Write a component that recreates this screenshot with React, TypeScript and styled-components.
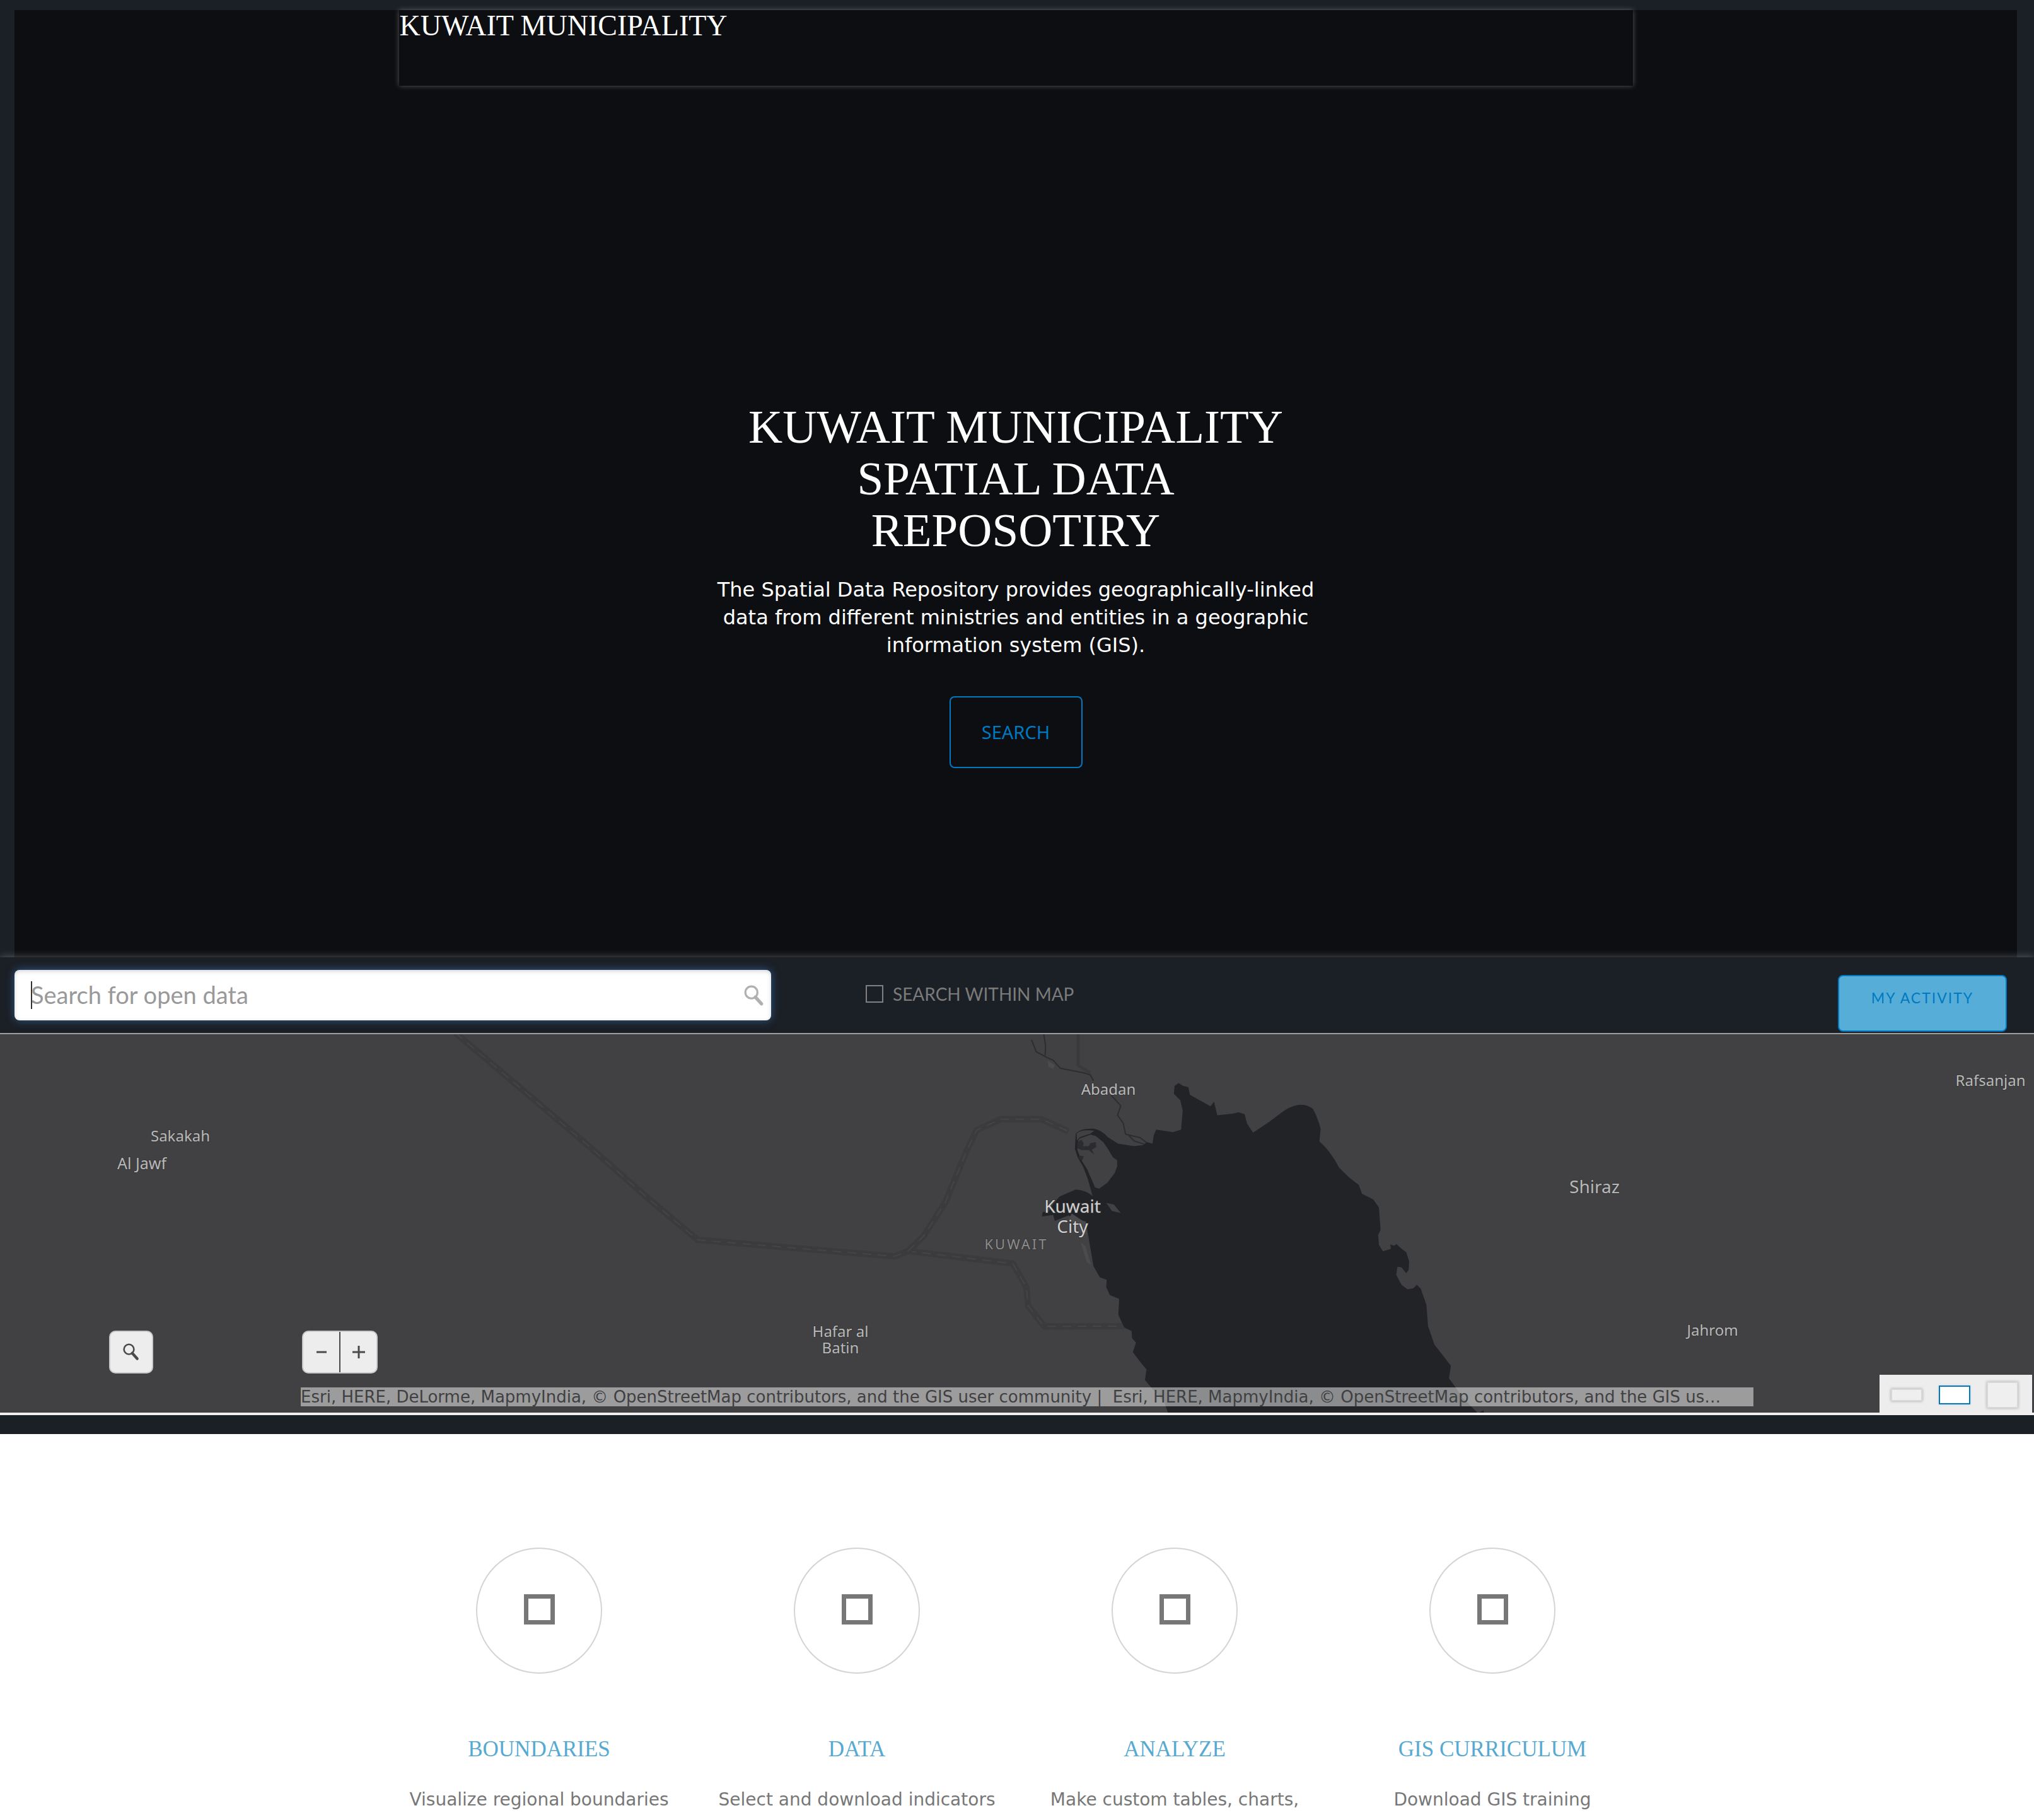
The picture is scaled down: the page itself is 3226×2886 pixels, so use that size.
import React from "react";
import styled, { createGlobalStyle } from "styled-components";

const SERIF = '"Liberation Serif", serif';
const BODY = '"DejaVu Sans", sans-serif';
const UI = 'Lato, "Liberation Sans", sans-serif';
const HUMAN = '"Noto Sans", "Liberation Sans", sans-serif';

const GlobalStyle = createGlobalStyle`
  *, *::before, *::after { box-sizing: border-box; }
  body { margin: 0; background: #1b1f26; font-family: ${BODY}; overflow-x: hidden; }
  h1, h2, p { margin: 0; font-weight: 400; }
  button, input { font: inherit; }
  button { cursor: pointer; padding: 0; }
`;

const HeroFrame = styled.header`
  padding: 16px 27px 0 23px;
`;

const Hero = styled.div`
  display: flex;
  flex-direction: column;
  align-items: center;
  min-height: 1502px;
  background: #0c0e11;
  color: #fff;
`;

const TitleBar = styled.div`
  width: 100%;
  max-width: 1957px;
  height: 120px;
  padding-left: 1px;
  background: #0c0e11;
  box-shadow: 0 0 8px rgba(255, 255, 255, 0.3);
`;

const SiteName = styled.p`
  font: 400 46px/50px ${SERIF};
`;

const Intro = styled.section`
  display: flex;
  flex-direction: column;
  align-items: center;
  max-width: 980px;
  padding-top: 500px;
  text-align: center;
`;

const Headline = styled.h1`
  font: 400 75px/82px ${SERIF};
  max-width: 900px;
`;

const Lead = styled.p`
  margin-top: 31px;
  font-size: 32px;
  line-height: 44px;
`;

const SearchLink = styled.a`
  display: grid;
  place-items: center;
  width: 211px;
  height: 114px;
  margin-top: 59px;
  border: 2px solid #0079c1;
  border-radius: 8px;
  color: #0079c1;
  font: 400 29px/32px ${HUMAN};
  text-decoration: none;
`;

const Toolbar = styled.form`
  display: flex;
  align-items: flex-start;
  min-height: 120px;
  padding: 20px 43px 0 23px;
  background: #1b1f26;
  box-shadow: 0 0 12px rgba(255, 255, 255, 0.3);
  position: relative;
`;

const SearchField = styled.div`
  position: relative;
  display: flex;
  flex: 0 1 1200px;
  height: 80px;

  &::before {
    content: "";
    position: absolute;
    left: 26px;
    top: 18px;
    width: 2px;
    height: 44px;
    background: #333;
  }

  svg {
    position: absolute;
    right: 10px;
    top: 24px;
  }
`;

const SearchInput = styled.input`
  width: 100%;
  padding: 0 64px 2px 26px;
  border: 0;
  border-radius: 8px;
  outline: 0;
  background: #fff;
  color: #333;
  font: 400 38px/44px ${UI};
  box-shadow: inset 0 2px 6px rgba(30, 40, 70, 0.2), 0 0 14px rgba(60, 130, 200, 0.6);

  &::placeholder { color: #999; opacity: 1; }
`;

const WithinMap = styled.label`
  display: flex;
  align-items: center;
  gap: 15px;
  margin: 20px 0 0 150px;
  color: #7b7b7b;
  font: 400 28px/36px ${UI};
`;

const Tick = styled.input`
  appearance: none;
  width: 28px;
  height: 28px;
  margin: 0;
  border: 2px solid #808080;
`;

const ActivityButton = styled.button`
  width: 268px;
  height: 90px;
  margin: 8px 0 0 auto;
  padding-bottom: 18px;
  border: 2px solid #0079c1;
  border-radius: 8px;
  background: #56aed8;
  color: #0079c1;
  font: 400 23px/28px ${UI};
  letter-spacing: 2px;
`;

const MapPane = styled.section`
  position: relative;
  height: 606px;
  border-top: 2px solid #9d9ea0;
  border-bottom: 4px solid #efefef;
  background: #414143;
  overflow: hidden;
`;

const MapDrawing = styled.svg`
  display: block;
  width: 100%;
  height: 600px;
`;

const MapTool = styled.div<{ $left: number }>`
  position: absolute;
  left: ${(p) => p.$left}px;
  bottom: 62px;
  display: flex;
  height: 68px;
  border: 2px solid #c8c8ca;
  border-radius: 10px;
  background: #ededed;
`;

const ToolButton = styled.button<{ $width: number }>`
  display: grid;
  place-items: center;
  width: ${(p) => p.$width}px;
  border: 0;
  background: none;
  color: #4a4a4a;

  & + & { border-left: 2px solid #4a4a4a; }
`;

const Attribution = styled.p`
  position: absolute;
  left: 477px;
  right: 445px;
  bottom: 10px;
  height: 30px;
  padding-right: 16px;
  overflow: hidden;
  background: rgba(255, 255, 255, 0.48);
  color: #404042;
  font-size: 26px;
  line-height: 30px;
  white-space: pre;
  text-overflow: ellipsis;
`;

const SizePicker = styled.div`
  position: absolute;
  right: 3px;
  bottom: 0;
  display: flex;
  align-items: center;
  justify-content: space-between;
  width: 242px;
  height: 60px;
  padding: 4px 22px 0 18px;
  background: #ededed;
`;

const SizeButton = styled.button<{ $height: number; $active?: boolean }>`
  width: 50px;
  height: ${(p) => p.$height}px;
  border: 2px solid ${(p) => (p.$active ? "#0079c1" : "#d8d8d8")};
  background: ${(p) => (p.$active ? "#fff" : "#efefef")};
  box-shadow: 0 0 4px rgba(0, 0, 0, ${(p) => (p.$active ? 0.1 : 0.3)});
`;

const Features = styled.main`
  display: grid;
  grid-template-columns: repeat(4, minmax(0, 504px));
  justify-content: center;
  margin-top: 30px;
  padding: 180px 4px 0 0;
  background: #fff;
`;

const Feature = styled.article`
  display: flex;
  flex-direction: column;
  align-items: center;
  text-align: center;
`;

const Badge = styled.div`
  display: grid;
  place-items: center;
  width: 200px;
  height: 200px;
  padding-bottom: 4px;
  border: 2px solid #d4d4d4;
  border-radius: 50%;
`;

const Glyph = styled.span`
  width: 49px;
  height: 48px;
  border: 7px solid #777;
`;

const FeatureTitle = styled.h2`
  margin-top: 100px;
  color: #56aad2;
  font: 400 35px/40px ${SERIF};
`;

const FeatureText = styled.p`
  margin-top: 40px;
  height: 52px;
  overflow: hidden;
  color: #777;
  font-size: 28px;
  line-height: 40px;
`;

const Magnifier = ({ size, color }: { size: number; color: string }) => (
  <svg width={size} height={size} viewBox="0 0 30 32" fill="none" stroke={color} aria-hidden="true">
    <circle cx="11" cy="11" r="9" strokeWidth="3" />
    <path d="M17 18 L26 28" strokeWidth="5" strokeLinecap="round" />
  </svg>
);

const LABELS = [
  { lines: ["Sakakah"], x: 286, y: 170, size: 24 },
  { lines: ["Al Jawf"], x: 225, y: 214, size: 25 },
  { lines: ["Abadan"], x: 1758, y: 96, size: 24 },
  { lines: ["Kuwait", "City"], x: 1701, y: 283, size: 28, leading: 32, color: "#d0d0d0" },
  { lines: ["Hafar al", "Batin"], x: 1333, y: 480, size: 24, leading: 26 },
  { lines: ["Shiraz"], x: 2529, y: 252, size: 28 },
  { lines: ["Rafsanjan"], x: 3157, y: 82, size: 24 },
  { lines: ["Jahrom"], x: 2716, y: 478, size: 24 },
];

const BORDERS = [
  "M160 20 L300 250 L440 480 L560 685 L662 850 L1070 916 L1098 895 L1315 945 L1343 1040 L1347 1115 L1380 1197 L1560 1196",
  "M1098 895 L1130 835 L1175 700 L1220 490 L1240 410 L1290 366 L1375 366 L1430 415",
];

const SEA =
  "M726 232 L736 221 L746 232 L760 238 L764 268 L815 314 L824 296 L832 350 L870 344 L885 338 L900 346 L906 384 L921 420 " +
  "L960 378 L1000 330 Q1042 288 1070 325 Q1082 360 1089 405 L1086 455 Q1112 490 1135 560 L1160 600 L1184 630 L1192 665 L1220 688 " +
  "L1234 720 L1238 810 L1232 830 L1234 870 L1244 896 L1264 886 L1262 868 L1272 874 L1277 866 L1290 885 L1302 900 L1309 935 L1308 970 L1302 984 " +
  "L1290 960 L1280 958 L1277 990 L1290 1030 L1305 1048 L1320 1044 L1328 1030 L1338 1046 L1352 1110 L1356 1195 L1372 1270 L1413 1355 L1408 1405 " +
  "L1424 1440 L1440 1480 L1480 1545 L1494 1534 L1500 1570 L715 1570 L700 1500 L672 1450 L652 1412 L656 1370 L636 1330 L622 1300 L630 1262 L620 1244 " +
  "L619 1216 L600 1200 L586 1150 L588 1086 L565 1072 L556 1040 L557 1010 L540 1000 L524 955 L514 860 L505 775 L478 766 L462 752 L428 774 L424 750 " +
  "L396 756 L398 738 L412 738 L424 706 L440 676 L480 648 Q505 650 522 674 L510 606 L498 555 L485 520 L478 485 L480 425 Q490 402 525 404 " +
  "Q545 410 560 438 L585 464 L625 474 L648 470 L656 458 L671 464 L674 430 L680 408 L722 418 L742 408 L746 330 L740 290 L724 264 Z";

const ISLANDS = [
  "M486 452 L490 443 L517 428 L530 434 L549 459 L560 485 L572 518 L583 531 L583 556 L577 582 L559 620 L538 645 L528 640 L519 606 L508 565 L494 530 L484 489 Z",
  "M482 424 Q492 406 526 412 L516 424 L490 438 L483 452 Z",
  "M556 702 L575 708 L592 742 L570 734 Z",
];

const RegionMap = () => (
  <MapDrawing viewBox="0 0 3226 600" preserveAspectRatio="xMidYMin slice" role="img" aria-label="Map of Kuwait and its neighbours">
    <g transform="translate(600 -10) scale(0.7653 0.3954)" fill="none" strokeLinejoin="round">
      {BORDERS.map((d) => (
        <g key={d}>
          <path d={d} stroke="#3b3b3d" strokeWidth="10" vectorEffect="non-scaling-stroke" />
          <path d={d} stroke="#454547" strokeWidth="2" strokeDasharray="14 10" vectorEffect="non-scaling-stroke" />
        </g>
      ))}
    </g>
    <g transform="translate(1400 -10) scale(0.6378 0.3954)">
      <path d={SEA} fill="#222327" />
      {ISLANDS.map((d) => <path key={d} d={d} fill="#414143" />)}
      <path d="M484 458 L494 448 L500 462 L498 474 L512 474 L516 462 L530 458 L531 478 L520 488 L526 508 L512 490 L494 490 L484 482 Z M488 512 L500 514 L496 532 L488 524 Z" fill="#2b2c30" />
      <g fill="none" stroke="#2c2d31" strokeWidth="2" strokeLinejoin="round">
        <path vectorEffect="non-scaling-stroke" d="M370 48 L382 96 L408 118 L424 130 L442 162 L500 180 L516 188 L524 212 M400 20 L405 72 L404 110" />
        <path vectorEffect="non-scaling-stroke" d="M568 270 L592 312 L584 350 L598 382 L604 426 L640 440 L656 460 M612 432 L626 454 L650 466" />
      </g>
      <path vectorEffect="non-scaling-stroke" d="M486 20 L486 150 L516 180" fill="none" stroke="#3a3a3c" strokeWidth="5" />
      <path d="M470 744 L488 764 L504 780 L508 830 L490 820 L478 790 L462 770 Z M492 860 L504 875 L518 950 L508 940 Z M410 130 L428 150 L424 164 L412 156 Z" fill="#4b4b4d" />
    </g>
    <g fontFamily={HUMAN} textAnchor="middle" stroke="#38383a" strokeWidth="2" paintOrder="stroke">
      {LABELS.map((l) => (
        <text key={l.lines[0]} y={l.y} fontSize={l.size} fill={l.color ?? "#b8b8b8"}>
          {l.lines.map((line, i) => (
            <tspan key={line} x={l.x} dy={i ? l.leading : 0}>{line}</tspan>
          ))}
        </text>
      ))}
      <text x="1612" y="341" fontSize="22" letterSpacing="3" fill="#8c8c8c">KUWAIT</text>
    </g>
  </MapDrawing>
);

const FEATURES = [
  { title: "BOUNDARIES", text: "Visualize regional boundaries" },
  { title: "DATA", text: "Select and download indicators" },
  { title: "ANALYZE", text: "Make custom tables, charts," },
  { title: "GIS CURRICULUM", text: "Download GIS training" },
];

export default function App() {
  return (
    <>
      <GlobalStyle />
      <HeroFrame>
        <Hero>
          <TitleBar>
            <SiteName>KUWAIT MUNICIPALITY</SiteName>
          </TitleBar>
          <Intro>
            <Headline>KUWAIT MUNICIPALITY SPATIAL DATA REPOSOTIRY</Headline>
            <Lead>
              The Spatial Data Repository provides geographically-linked data from different
              ministries and entities in a geographic information system (GIS).
            </Lead>
            <SearchLink href="#search">SEARCH</SearchLink>
          </Intro>
        </Hero>
      </HeroFrame>
      <Toolbar id="search" onSubmit={(e) => e.preventDefault()}>
        <SearchField>
          <SearchInput type="text" placeholder="Search for open data" aria-label="Search for open data" />
          <Magnifier size={34} color="#b0b0b0" />
        </SearchField>
        <WithinMap>
          <Tick type="checkbox" />
          SEARCH WITHIN MAP
        </WithinMap>
        <ActivityButton type="button">MY ACTIVITY</ActivityButton>
      </Toolbar>
      <MapPane>
        <RegionMap />
        <MapTool $left={173}>
          <ToolButton type="button" $width={66} aria-label="Search the map">
            <Magnifier size={28} color="#4a4a4a" />
          </ToolButton>
        </MapTool>
        <MapTool $left={479}>
          <ToolButton type="button" $width={57} aria-label="Zoom out">
            <svg width="22" height="22" aria-hidden="true"><path d="M3 11h16" stroke="#4a4a4a" strokeWidth="3" /></svg>
          </ToolButton>
          <ToolButton type="button" $width={59} aria-label="Zoom in">
            <svg width="22" height="22" aria-hidden="true"><path d="M1 11h20M11 1v20" stroke="#4a4a4a" strokeWidth="3" /></svg>
          </ToolButton>
        </MapTool>
        <Attribution>
          {"Esri, HERE, DeLorme, MapmyIndia, © OpenStreetMap contributors, and the GIS user community |  Esri, HERE, MapmyIndia, © OpenStreetMap contributors, and the GIS us…"}
        </Attribution>
        <SizePicker>
          <SizeButton type="button" $height={20} aria-label="Small map" />
          <SizeButton type="button" $height={30} $active aria-label="Medium map" />
          <SizeButton type="button" $height={42} aria-label="Large map" />
        </SizePicker>
      </MapPane>
      <Features>
        {FEATURES.map((f) => (
          <Feature key={f.title}>
            <Badge><Glyph /></Badge>
            <FeatureTitle>{f.title}</FeatureTitle>
            <FeatureText>{f.text}</FeatureText>
          </Feature>
        ))}
      </Features>
    </>
  );
}
